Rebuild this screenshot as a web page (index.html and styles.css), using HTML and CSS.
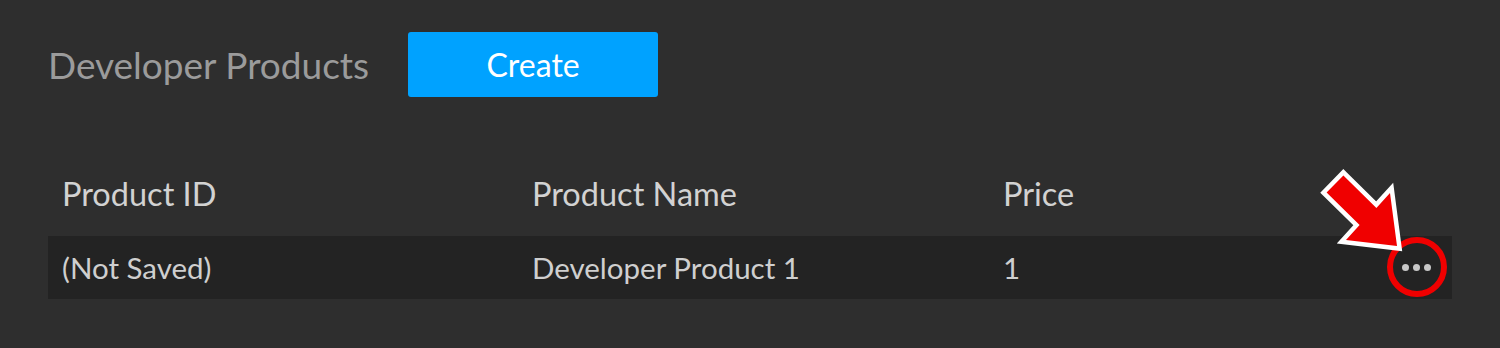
FILE: index.html
```html
<!DOCTYPE html>
<html>
<head>
<meta charset="utf-8">
<link rel="stylesheet" href="styles.css">
</head>
<body>
<div class="page">
  <div class="topbar">
    <h1 class="title">Developer Products</h1>
    <button class="create-btn">Create</button>
  </div>
  <div class="table">
    <div class="row head">
      <div class="cell">Product ID</div>
      <div class="cell">Product Name</div>
      <div class="cell">Price</div>
      <div class="cell"></div>
    </div>
    <div class="row data">
      <div class="cell">(Not Saved)</div>
      <div class="cell">Developer Product 1</div>
      <div class="cell">1</div>
      <div class="cell more"><span class="dot"></span><span class="dot"></span><span class="dot"></span></div>
    </div>
  </div>
  <svg class="annotation" width="150" height="150" viewBox="0 0 150 150">
    <circle cx="107" cy="107" r="27" fill="none" stroke="#f00000" stroke-width="6"/>
    <polygon points="33.4,15.4 66.4,47.9 80,33 87,86 36,80 49.6,65.1 16.6,32.6" fill="#f00000" stroke="#ffffff" stroke-width="9" stroke-linejoin="miter" paint-order="stroke"/>
  </svg>
</div>
</body>
</html>
```
FILE: styles.css
```css
html, body {
  margin: 0;
  padding: 0;
  background: #2e2e2e;
}
body {
  font-family: "Lato", "Open Sans", sans-serif;
  width: 1500px;
  height: 348px;
  overflow: hidden;
}
.page {
  position: relative;
  padding: 32px 48px 0 48px;
}
.topbar {
  display: flex;
  align-items: center;
  gap: 39px;
}
.title {
  margin: 0;
  font-weight: 400;
  font-size: 37px;
  color: #9b9b9b;
}
.create-btn {
  width: 250px;
  height: 65px;
  border: none;
  border-radius: 3px;
  background: #00a2ff;
  color: #ffffff;
  font-family: inherit;
  font-size: 32px;
  padding: 0;
}
.table {
  margin-top: 63px;
  width: 1404px;
}
.row {
  display: grid;
  grid-template-columns: 470px 471px 1fr 70px;
  align-items: center;
  box-sizing: border-box;
}
.row.head {
  height: 76px;
  padding-bottom: 10px;
  color: #d2d2d2;
  font-size: 32.5px;
}
.row.data {
  height: 63px;
  background: #232323;
  color: #cfcfcf;
  font-size: 29.5px;
}
.cell {
  padding-left: 14px;
}
.more {
  display: flex;
  gap: 4px;
  padding-left: 20px;
}
.dot {
  width: 7px;
  height: 7px;
  border-radius: 50%;
  background: #c8c8c8;
}
.annotation {
  position: absolute;
  left: 1310px;
  top: 160px;
}
```
